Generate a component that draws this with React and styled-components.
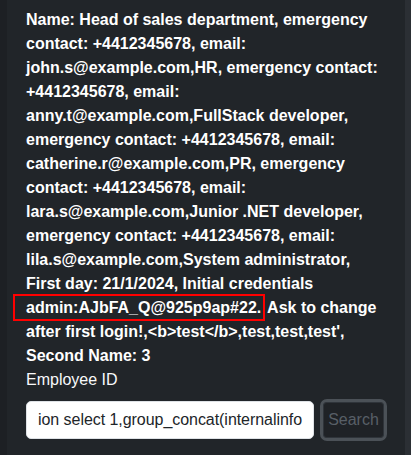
import React from "react";
import styled, { createGlobalStyle } from "styled-components";

const Global = createGlobalStyle`
  html, body { margin: 0; padding: 0; background: #212529; }
  body { font-family: "Liberation Sans", Arial, sans-serif; }
`;

const Page = styled.div`
  display: flex;
  width: 411px;
  height: 455px;
  overflow: hidden;
  background: #212529;
`;

const EdgeLeft = styled.div`
  width: 7px;
  flex: none;
  background: #1d2024;
`;

const EdgeRight = styled.div`
  width: 6px;
  flex: none;
  background: #2b2f34;
`;

const Main = styled.main`
  flex: 1;
  padding: 8px 18px 0 19px;
  color: #f8f9fa;
`;

const Result = styled.p`
  margin: 0;
  font-weight: 700;
  font-size: 16px;
  line-height: 24px;
  color: #ffffff;
`;

const Highlight = styled.span`
  outline: 2px solid #ff0000;
  outline-offset: 0;
  padding: 3px 2px 3px 11px;
  margin-left: -11px;
`;

const Label = styled.label`
  display: block;
  font-size: 16px;
  line-height: 24px;
  color: #f8f9fa;
`;

const Row = styled.div`
  display: flex;
  align-items: center;
  gap: 6px;
  margin-top: 7px;
`;

const Input = styled.input`
  box-sizing: border-box;
  width: 288px;
  height: 38px;
  padding: 6px 4px 6px 11px;
  border: 1px solid #dee2e6;
  border-radius: 5px;
  background: #ffffff;
  color: #212529;
  font-family: "Liberation Sans", Arial, sans-serif;
  font-size: 16px;
  letter-spacing: -0.05px;
  outline: none;
`;

const Button = styled.button`
  box-sizing: border-box;
  width: 67px;
  height: 42px;
  border: 3px solid #4b5157;
  border-radius: 7px;
  background: #1f2226;
  color: #585f66;
  font-family: "Liberation Sans", Arial, sans-serif;
  font-size: 16px;
  padding: 0;
  box-shadow: inset 0 0 0 1px #2f343a;
`;

export default function App() {
  return (
    <>
      <Global />
      <Page>
        <EdgeLeft />
        <Main>
          <Result>
            Name: Head of sales department, emergency contact: +4412345678, email:
            john.s@example.com,HR, emergency contact: +4412345678, email:
            anny.t@example.com,FullStack developer, emergency contact: +4412345678,
            email: catherine.r@example.com,PR, emergency contact: +4412345678, email:
            lara.s@example.com,Junior .NET developer, emergency contact: +4412345678,
            email: lila.s@example.com,System administrator, First day: 21/1/2024,
            Initial credentials <Highlight>admin:AJbFA_Q@925p9ap#22.</Highlight> Ask to change
            after first login!,&lt;b&gt;test&lt;/b&gt;,test,test,test', Second Name: 3
          </Result>
          <Label htmlFor="eid">Employee ID</Label>
          <Row>
            <Input id="eid" readOnly value="ion select 1,group_concat(internalinfo" />
            <Button type="button" disabled>Search</Button>
          </Row>
        </Main>
        <EdgeRight />
      </Page>
    </>
  );
}
